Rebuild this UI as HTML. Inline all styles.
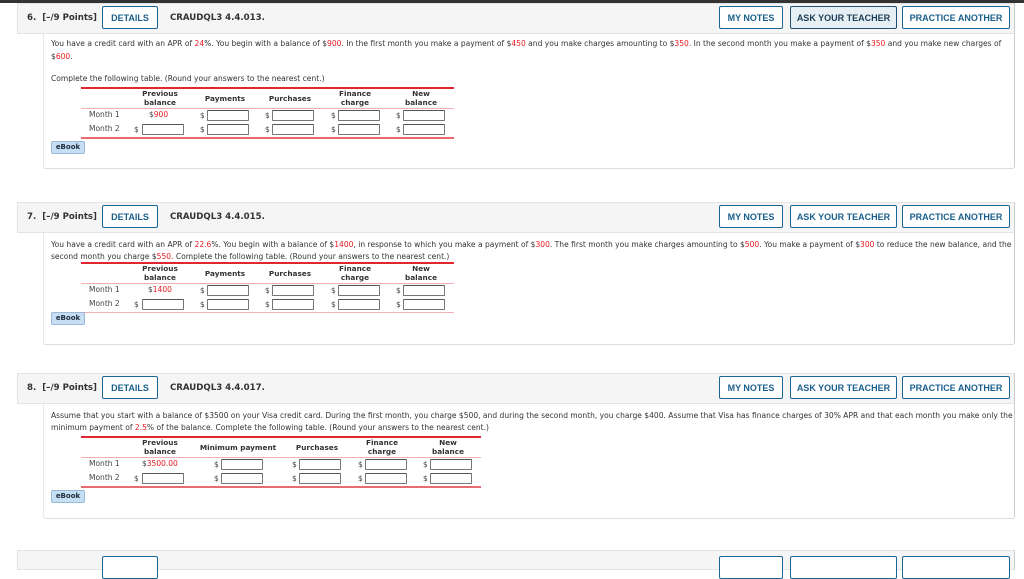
<!DOCTYPE html>
<html><head><meta charset="utf-8"><style>
*{box-sizing:border-box;margin:0;padding:0}
body{width:1024px;height:564px;background:#fff;position:relative;overflow:hidden;font-family:"DejaVu Sans","Liberation Sans",sans-serif;color:#333}
.a{position:absolute;white-space:nowrap}
.top{left:0;top:0;width:1024px;height:3px;background:#333}
.hd{position:absolute;left:17px;width:998px;height:31px;background:#f5f5f5;border:1px solid #e4e4e4;border-right:1px solid #ccc}
.hd .n{position:absolute;left:9px;top:9px;font:bold 8.6px "DejaVu Sans",sans-serif;color:#333}
.hd .id{position:absolute;left:152px;top:9px;font:bold 8.6px "DejaVu Sans",sans-serif;color:#333}
.btn{position:absolute;top:2px;height:23px;border:1px solid #1a6496;border-radius:2px;background:#fff;color:#1a5f8c;font:bold 9px "Liberation Sans",sans-serif;display:flex;align-items:center;justify-content:center}
.btn.g{background:#e6f0f4;color:#1d3c55;border-color:#1d4f73}
.bx{position:absolute;left:43px;width:972px;border-left:1px solid #e8e8e8;border-right:1px solid #ccc;border-bottom:1px solid #ddd;border-radius:0 0 3px 3px}
.t{position:absolute;left:51px;font-size:7.55px;color:#333;white-space:nowrap}
.r{color:#e8191f}
.rl{position:absolute;height:2px;background:#e0262f}
.pl{position:absolute;height:1px;background:#f2aeb2}
.bl{position:absolute;height:2px;background:#e96b72}
.th{position:absolute;font:bold 7.3px "DejaVu Sans",sans-serif;color:#333;text-align:center;line-height:9px;transform:translateX(-50%);white-space:nowrap}
.ml{position:absolute;font-size:7.5px;color:#444}
.d{position:absolute;font-size:7.5px;color:#444}
.in{position:absolute;width:42px;height:11px;border:1px solid #777;border-top-color:#555;background:#fff;border-radius:1px}
.eb{position:absolute;left:51px;width:34px;height:13px;background:#c6def3;border:1px solid #9ab9d6;border-radius:2px;font:bold 7px "DejaVu Sans",sans-serif;color:#1e2c3a;text-align:center;line-height:11px}
</style></head><body>
<div class="a top"></div>

<!-- Q6 -->
<div class="hd" style="top:3px"><div class="n">6.&nbsp; [–/9 Points]</div>
<div class="btn" style="left:84px;width:56px">DETAILS</div><div class="id">CRAUDQL3 4.4.013.</div>
<div class="btn" style="left:701px;width:64px">MY NOTES</div><div class="btn g" style="left:772px;width:107px">ASK YOUR TEACHER</div><div class="btn" style="left:884px;width:108px">PRACTICE ANOTHER</div></div>
<div class="bx" style="top:34px;height:135px"></div>
<div class="t" style="top:39px">You have a credit card with an APR of <span class="r">24</span>%. You begin with a balance of $<span class="r">900</span>. In the first month you make a payment of $<span class="r">450</span> and you make charges amounting to $<span class="r">350</span>. In the second month you make a payment of $<span class="r">350</span> and you make new charges of</div>
<div class="t" style="top:52px">$<span class="r">600</span>.</div>
<div class="t" style="top:74px">Complete the following table. (Round your answers to the nearest cent.)</div>
<div class="rl" style="left:81px;top:87px;width:373px"></div>
<div class="th" style="left:160px;top:89px">Previous<br>balance</div>
<div class="th" style="left:225px;top:94px">Payments</div>
<div class="th" style="left:290px;top:94px">Purchases</div>
<div class="th" style="left:355px;top:89px">Finance<br>charge</div>
<div class="th" style="left:421px;top:89px">New<br>balance</div>
<div class="pl" style="left:81px;top:108px;width:373px"></div>
<div class="ml" style="left:89px;top:110px">Month 1</div><div class="d" style="left:149px;top:110px">$<span class="r">900</span></div>
<div class="d" style="left:200px;top:111px">$</div><div class="in" style="left:207px;top:110px"></div>
<div class="d" style="left:265px;top:111px">$</div><div class="in" style="left:272px;top:110px"></div>
<div class="d" style="left:331px;top:111px">$</div><div class="in" style="left:338px;top:110px"></div>
<div class="d" style="left:396px;top:111px">$</div><div class="in" style="left:403px;top:110px"></div>
<div class="ml" style="left:89px;top:124px">Month 2</div>
<div class="d" style="left:134px;top:125px">$</div><div class="in" style="left:142px;top:124px"></div>
<div class="d" style="left:200px;top:125px">$</div><div class="in" style="left:207px;top:124px"></div>
<div class="d" style="left:265px;top:125px">$</div><div class="in" style="left:272px;top:124px"></div>
<div class="d" style="left:331px;top:125px">$</div><div class="in" style="left:338px;top:124px"></div>
<div class="d" style="left:396px;top:125px">$</div><div class="in" style="left:403px;top:124px"></div>
<div class="bl" style="left:81px;top:137px;width:373px"></div>
<div class="eb" style="top:141px">eBook</div>

<!-- Q7 -->
<div class="hd" style="top:202px"><div class="n">7.&nbsp; [–/9 Points]</div>
<div class="btn" style="left:84px;width:56px">DETAILS</div><div class="id">CRAUDQL3 4.4.015.</div>
<div class="btn" style="left:701px;width:64px">MY NOTES</div><div class="btn" style="left:772px;width:107px">ASK YOUR TEACHER</div><div class="btn" style="left:884px;width:108px">PRACTICE ANOTHER</div></div>
<div class="bx" style="top:233px;height:112px"></div>
<div class="t" style="top:240px">You have a credit card with an APR of <span class="r">22.6</span>%. You begin with a balance of $<span class="r">1400</span>, in response to which you make a payment of $<span class="r">300</span>. The first month you make charges amounting to $<span class="r">500</span>. You make a payment of $<span class="r">300</span> to reduce the new balance, and the</div>
<div class="t" style="top:252px">second month you charge $<span class="r">550</span>. Complete the following table. (Round your answers to the nearest cent.)</div>
<div class="rl" style="left:81px;top:262px;width:373px"></div>
<div class="th" style="left:160px;top:264px">Previous<br>balance</div>
<div class="th" style="left:225px;top:269px">Payments</div>
<div class="th" style="left:290px;top:269px">Purchases</div>
<div class="th" style="left:355px;top:264px">Finance<br>charge</div>
<div class="th" style="left:421px;top:264px">New<br>balance</div>
<div class="pl" style="left:81px;top:283px;width:373px"></div>
<div class="ml" style="left:89px;top:285px">Month 1</div><div class="d" style="left:148px;top:285px">$<span class="r">1400</span></div>
<div class="d" style="left:200px;top:286px">$</div><div class="in" style="left:207px;top:285px"></div>
<div class="d" style="left:265px;top:286px">$</div><div class="in" style="left:272px;top:285px"></div>
<div class="d" style="left:331px;top:286px">$</div><div class="in" style="left:338px;top:285px"></div>
<div class="d" style="left:396px;top:286px">$</div><div class="in" style="left:403px;top:285px"></div>
<div class="ml" style="left:89px;top:299px">Month 2</div>
<div class="d" style="left:134px;top:300px">$</div><div class="in" style="left:142px;top:299px"></div>
<div class="d" style="left:200px;top:300px">$</div><div class="in" style="left:207px;top:299px"></div>
<div class="d" style="left:265px;top:300px">$</div><div class="in" style="left:272px;top:299px"></div>
<div class="d" style="left:331px;top:300px">$</div><div class="in" style="left:338px;top:299px"></div>
<div class="d" style="left:396px;top:300px">$</div><div class="in" style="left:403px;top:299px"></div>
<div class="pl" style="left:81px;top:312px;width:373px"></div>
<div class="eb" style="top:312px">eBook</div>

<!-- Q8 -->
<div class="hd" style="top:373px"><div class="n">8.&nbsp; [–/9 Points]</div>
<div class="btn" style="left:84px;width:56px">DETAILS</div><div class="id">CRAUDQL3 4.4.017.</div>
<div class="btn" style="left:701px;width:64px">MY NOTES</div><div class="btn" style="left:772px;width:107px">ASK YOUR TEACHER</div><div class="btn" style="left:884px;width:108px">PRACTICE ANOTHER</div></div>
<div class="bx" style="top:404px;height:115px"></div>
<div class="t" style="top:411px">Assume that you start with a balance of $3500 on your Visa credit card. During the first month, you charge $500, and during the second month, you charge $400. Assume that Visa has finance charges of 30% APR and that each month you make only the</div>
<div class="t" style="top:423px">minimum payment of <span class="r">2.5</span>% of the balance. Complete the following table. (Round your answers to the nearest cent.)</div>
<div class="rl" style="left:81px;top:436px;width:400px"></div>
<div class="th" style="left:160px;top:438px">Previous<br>balance</div>
<div class="th" style="left:238px;top:443px">Minimum payment</div>
<div class="th" style="left:317px;top:443px">Purchases</div>
<div class="th" style="left:382px;top:438px">Finance<br>charge</div>
<div class="th" style="left:448px;top:438px">New<br>balance</div>
<div class="pl" style="left:81px;top:457px;width:400px"></div>
<div class="ml" style="left:89px;top:459px">Month 1</div><div class="d" style="left:142px;top:459px">$<span class="r">3500.00</span></div>
<div class="d" style="left:214px;top:460px">$</div><div class="in" style="left:221px;top:459px"></div>
<div class="d" style="left:292px;top:460px">$</div><div class="in" style="left:299px;top:459px"></div>
<div class="d" style="left:358px;top:460px">$</div><div class="in" style="left:365px;top:459px"></div>
<div class="d" style="left:423px;top:460px">$</div><div class="in" style="left:430px;top:459px"></div>
<div class="ml" style="left:89px;top:473px">Month 2</div>
<div class="d" style="left:134px;top:474px">$</div><div class="in" style="left:142px;top:473px"></div>
<div class="d" style="left:214px;top:474px">$</div><div class="in" style="left:221px;top:473px"></div>
<div class="d" style="left:292px;top:474px">$</div><div class="in" style="left:299px;top:473px"></div>
<div class="d" style="left:358px;top:474px">$</div><div class="in" style="left:365px;top:473px"></div>
<div class="d" style="left:423px;top:474px">$</div><div class="in" style="left:430px;top:473px"></div>
<div class="bl" style="left:81px;top:486px;width:400px"></div>
<div class="eb" style="top:490px">eBook</div>

<!-- Q9 partial -->
<div class="hd" style="top:550px;height:20px">
<div class="btn" style="left:84px;width:56px;top:5px">&nbsp;</div>
<div class="btn" style="left:701px;width:64px;top:5px">&nbsp;</div><div class="btn" style="left:772px;width:107px;top:5px">&nbsp;</div><div class="btn" style="left:884px;width:108px;top:5px">&nbsp;</div></div>
</body></html>
